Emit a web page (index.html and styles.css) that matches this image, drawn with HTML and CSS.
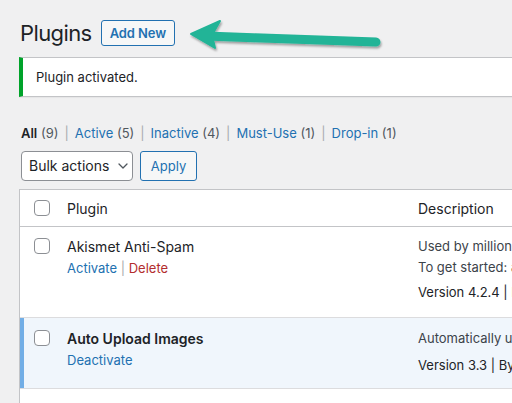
FILE: index.html
```
<!DOCTYPE html>
<html>
<head>
<meta charset="utf-8">
<link rel="stylesheet" href="styles.css">
</head>
<body>
<div class="wrap">
  <div class="heading">
    <h1 class="title">Plugins</h1>
    <a class="add-new">Add New</a>
  </div>
  <div class="notice"><p>Plugin activated.</p></div>
  <ul class="filters">
    <li><b class="current">All</b> <span class="count">(9)</span></li>
    <li class="sep">|</li>
    <li><a>Active</a> <span class="count">(5)</span></li>
    <li class="sep">|</li>
    <li><a>Inactive</a> <span class="count">(4)</span></li>
    <li class="sep">|</li>
    <li><a>Must-Use</a> <span class="count">(1)</span></li>
    <li class="sep">|</li>
    <li><a>Drop-in</a> <span class="count">(1)</span></li>
  </ul>
  <div class="bulk">
    <div class="select">Bulk actions
      <svg class="chev" width="10" height="6" viewBox="0 0 10 6"><path d="M1 1 L5 5 L9 1" fill="none" stroke="#50575e" stroke-width="1.3" stroke-linecap="round" stroke-linejoin="round"/></svg>
    </div>
    <a class="apply">Apply</a>
  </div>
  <div class="table">
    <div class="row head">
      <div class="cb"><span class="box"></span></div>
      <div class="col-name">Plugin</div>
      <div class="col-desc">Description</div>
    </div>
    <div class="row">
      <div class="cb"><span class="box"></span></div>
      <div class="col-name">
        <div class="pname">Akismet Anti-Spam</div>
        <div class="actions"><a>Activate</a> <span class="sep">|</span> <a class="del">Delete</a></div>
      </div>
      <div class="col-desc">
        <p class="line">Used by millions, Akismet is quite possibly the best way in the world to protect your blog from spam.</p>
        <p class="line">To get started: activate the Akismet plugin and then go to your Akismet Settings page.</p>
        <p class="ver">Version 4.2.4 | By Automattic - Anti Spam Team | View details</p>
      </div>
    </div>
    <div class="row active">
      <div class="cb"><span class="box"></span></div>
      <div class="col-name">
        <div class="pname bold">Auto Upload Images</div>
        <div class="actions"><a>Deactivate</a></div>
      </div>
      <div class="col-desc">
        <p class="line">Automatically upload external images of a post to WordPress upload directory.</p>
        <p class="ver v2">Version 3.3 | By Ali Irani | View details</p>
      </div>
    </div>
    <div class="row empty"></div>
  </div>
</div>
<svg class="arrow" width="512" height="80" viewBox="0 0 512 80">
  <defs>
    <filter id="sh" x="-10%" y="-50%" width="120%" height="200%">
      <feDropShadow dx="1" dy="2" stdDeviation="1.2" flood-color="#000" flood-opacity="0.35"/>
    </filter>
  </defs>
  <g filter="url(#sh)" fill="#21b497" stroke="#21b497">
    <line x1="206" y1="36" x2="376" y2="42" stroke-width="9" stroke-linecap="round"/>
    <polygon points="191,34 220,21 212,35 215,48" stroke-width="2" stroke-linejoin="round"/>
  </g>
</svg>
</body>
</html>
```
FILE: styles.css
```
html, body {
  margin: 0;
  padding: 0;
}
body {
  background: #f0f0f1;
  font-family: Inter, "Noto Sans", sans-serif;
  color: #1d2327;
  width: 512px;
  height: 403px;
  overflow: hidden;
  position: relative;
}
.wrap {
  width: 720px;
  padding: 0 0 0 19px;
}
.heading {
  display: flex;
  align-items: center;
  gap: 9px;
  padding-top: 19px;
  height: 28px;
}
.title {
  margin: 0;
  font-size: 22px;
  font-weight: 400;
  line-height: 28px;
  padding-left: 1px;
  letter-spacing: -0.6px;
}
.add-new {
  display: block;
  box-sizing: border-box;
  height: 26px;
  line-height: 24px;
  padding: 0 8px;
  border: 1px solid #2271b1;
  border-radius: 3px;
  background: #f6f7f7;
  color: #2271b1;
  font-size: 13px;
  font-weight: 600;
  letter-spacing: -0.1px;
}
.notice {
  margin-top: 10px;
  box-sizing: border-box;
  height: 40px;
  background: #fff;
  border: 1px solid #c3c4c7;
  border-left: 4px solid #00a32a;
  box-shadow: 0 1px 1px rgba(0,0,0,.04);
  display: flex;
  align-items: center;
  padding-left: 13px;
}
.notice p {
  margin: 0;
  font-size: 13px;
}
.filters {
  list-style: none;
  margin: 26px 0 0 2px;
  padding: 0;
  display: flex;
  gap: 6px;
  font-size: 13px;
  line-height: 20px;
  color: #50575e;
}
.filters a { color: #2271b1; }
.filters .current { color: #1d2327; font-weight: 600; }
.filters .sep { color: #a7aaad; }
.bulk {
  display: flex;
  gap: 7px;
  margin-top: 8px;
  padding-left: 2px;
}
.select {
  box-sizing: border-box;
  width: 112px;
  height: 30px;
  border: 1px solid #8c8f94;
  border-radius: 4px;
  background: #fff;
  font-size: 14px;
  line-height: 28px;
  padding-left: 7px;
  display: flex;
  align-items: center;
  gap: 9px;
}
.apply {
  box-sizing: border-box;
  width: 57px;
  height: 30px;
  border: 1px solid #2271b1;
  border-radius: 3px;
  background: #f6f7f7;
  color: #2271b1;
  font-size: 13px;
  line-height: 28px;
  text-align: center;
}
.table {
  margin-top: 8px;
  background: #fff;
  border: 1px solid #c3c4c7;
  border-right: none;
  height: 300px;
}
.row {
  display: grid;
  grid-template-columns: 37px 351px 1fr;
  border-top: 1px solid #dcdcde;
  padding: 9px 0 14px;
}
.row.head {
  border-top: none;
  border-bottom: 1px solid #c3c4c7;
  padding: 0;
  height: 36px;
  align-items: center;
  font-size: 14px;
}
.row.head + .row { border-top: none; }
.row.active {
  background: #f0f6fc;
  box-shadow: inset 4px 0 0 #72aee6;
  padding: 10px 0 12px;
}
.row.empty {
  padding: 0;
  height: 20px;
}
.cb {
  padding-left: 14px;
}
.row:not(.head) .cb { padding-top: 2px; }
.box {
  display: block;
  box-sizing: border-box;
  width: 16px;
  height: 16px;
  border: 1px solid #8c8f94;
  border-radius: 4px;
  background: #fff;
}
.col-name, .col-desc {
  padding-left: 10px;
}
.col-desc {
  white-space: nowrap;
  overflow: hidden;
}
.pname {
  font-size: 14px;
  line-height: 21px;
}
.pname.bold { font-weight: 600; }
.actions {
  margin-top: 1px;
  font-size: 13px;
  line-height: 20px;
  color: #a7aaad;
}
.actions a { color: #2271b1; }
.actions a.del { color: #b32d2e; }
.line {
  margin: 0;
  font-size: 13px;
  line-height: 21px;
  color: #3c434a;
}
.ver {
  margin: 4px 0 0;
  font-size: 13px;
  line-height: 21px;
  color: #1d2327;
}
.ver.v2 { margin-top: 6px; }
.arrow {
  position: absolute;
  left: 0;
  top: 0;
}
```
